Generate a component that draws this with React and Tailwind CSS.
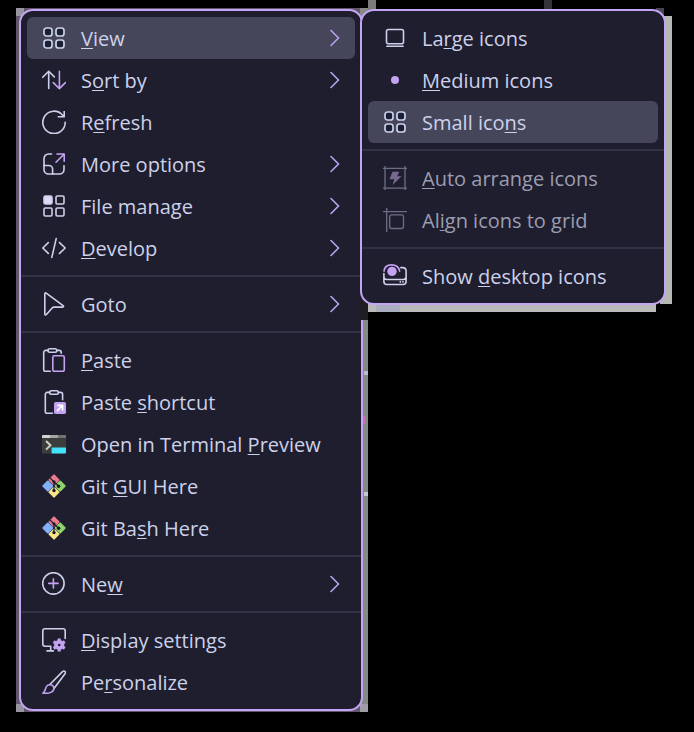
import React from "react";

const LINE = "#cdd0ea";
const ACCENT = "#c4a2f2";

function Icon({ children, className = "" }) {
  return (
    <svg
      viewBox="0 0 24 24"
      aria-hidden="true"
      fill="none"
      stroke={LINE}
      strokeWidth="1.6"
      strokeLinecap="round"
      strokeLinejoin="round"
      className={`h-6 w-6 shrink-0 ${className}`}
    >
      {children}
    </svg>
  );
}

const GridIcon = () => (
  <Icon>
    <g fill="#1b2135" strokeWidth="1.7">
      <rect x="2" y="2" width="8" height="8" rx="2.5" />
      <rect x="14" y="2" width="8" height="8" rx="2.5" />
      <rect x="2" y="14" width="8" height="8" rx="2.5" />
      <rect x="14" y="14" width="8" height="8" rx="2.5" />
    </g>
  </Icon>
);

const SortIcon = () => (
  <Icon>
    <path d="M6.7 20.5V3.3M.7 9.3l6-6 5.6 5.6" />
    <path stroke={ACCENT} d="M17.4 3.3v17.2M11.3 14.6l6.1 6 6-6" />
  </Icon>
);

const RefreshIcon = () => (
  <Icon>
    <path d="M23.2 12.3A11.2 11.2 0 1 1 20.6 5.2l1.5 1.3" />
    <path d="M22.2 1v5.7h-6.5" strokeLinecap="butt" />
  </Icon>
);

const OptionsIcon = () => (
  <Icon>
    <path d="M9.6 2H6.5A4.5 4.5 0 0 0 2 6.5v11A4.5 4.5 0 0 0 6.5 22h11a4.5 4.5 0 0 0 4.5-4.5v-3.7" />
    <path d="M2 13.500h5a3.600 3.600 0 0 1 3.600 3.600V22" />
    <path stroke={ACCENT} d="M14 10.200 22 2.200M15 2h7.200v7.300" />
  </Icon>
);

const TilesIcon = () => (
  <Icon>
    <rect x="2" y="2" width="8" height="8" rx="1.5" fill="#dcdcf8" />
    <rect x="14" y="2" width="8" height="8" rx="1.2" />
    <rect x="2" y="14" width="8" height="8" rx="1.2" />
    <rect x="14" y="14" width="8" height="8" rx="1.2" />
  </Icon>
);

const CodeIcon = () => (
  <Icon>
    <path d="M6.3 6.6.8 12l5.5 5.4M17.5 6.6l5.7 5.4-5.7 5.4M14.2 2.6 9.8 21.4" />
  </Icon>
);

const PointerIcon = () => (
  <Icon>
    <path d="M2.8 2v20c0 1.2.9 1.3 1.6.5l5.8-6.5c.6-.7 1-.9 1.8-.9h8.6c1 0 1.2-.9.5-1.4L4.200 1.200C3.400.6 2.800 1 2.800 2Z" />
  </Icon>
);

const PasteIcon = () => (
  <Icon>
    <path d="M6 2.400H3.700a2 2 0 0 0-2 2v17a2 2 0 0 0 2 2h4.500M14.800 2.400h2.400a2 2 0 0 1 2 2v.8" />
    <rect x="6" y=".8" width="8.800" height="3.400" rx="1.700" />
    <rect x="10.800" y="7.800" width="11.500" height="15.500" rx="1.600" stroke={ACCENT} />
  </Icon>
);

const PasteShortcutIcon = () => (
  <Icon>
    <path d="M7.600 2.400H5.300a2 2 0 0 0-2 2v17a2 2 0 0 0 2 2h5.200M16.400 2.400h2.200a2 2 0 0 1 2 2v5.400" />
    <rect x="7.600" y=".8" width="8.800" height="3.400" rx="1.700" />
    <rect x="12" y="12" width="12" height="12" rx="1.800" fill={ACCENT} stroke="none" />
    <path d="M15.500 20.600 20.200 15.800M16 15.400h4.600V20" stroke="#fff" />
  </Icon>
);

const TerminalIcon = () => (
  <Icon>
    <g stroke="none">
      <rect y="3" width="24" height="18.600" rx="1" fill="#3b3d3d" />
      <path d="M1 3h7v3H0V4a1 1 0 0 1 1-1Z" fill="#d2d2d2" />
      <path d="M8 3h8v3H8z" fill="#a5a5a5" />
      <path d="M16 3h7a1 1 0 0 1 1 1v2h-8z" fill="#737373" />
      <path d="M9.600 15.600H24v5a1 1 0 0 1-1 1H9.600z" fill="#42e2fb" />
    </g>
    <path d="M4 9l4.500 4.300L4 17.600" stroke="#cfcfc9" strokeWidth="2" strokeLinecap="butt" strokeLinejoin="miter" />
  </Icon>
);

const GitIcon = () => (
  <Icon>
    <g transform="rotate(45 12 12)" stroke="none">
      <rect x="3.500" y="3.500" width="8.300" height="8.300" rx="1" fill="#ea7b8c" />
      <rect x="12.200" y="3.500" width="8.300" height="8.300" rx="1" fill="#8fd46a" />
      <rect x="3.500" y="12.200" width="8.300" height="8.300" rx="1" fill="#82aff8" />
      <rect x="12.200" y="12.200" width="8.300" height="8.300" rx="1" fill="#f8e58b" />
    </g>
    <path d="M8.200 4.200 12 8v9M12 8l4.400 4" stroke="#191926" strokeWidth="1.200" />
    <g fill="#191926" stroke="none">
      <circle cx="12" cy="7.800" r="1.500" />
      <circle cx="12" cy="16.600" r="1.700" />
      <circle cx="16.600" cy="12.200" r="1.700" />
    </g>
  </Icon>
);

const NewIcon = () => (
  <Icon>
    <circle cx="11.400" cy="11.400" r="10.700" />
    <path stroke={ACCENT} d="M11.400 6.700v9.400M6.700 11.400h9.400" />
  </Icon>
);

const DisplayIcon = () => (
  <Icon>
    <path d="M8.700 18.300H3A2.200 2.200 0 0 1 .8 16.100V3A2.200 2.200 0 0 1 3 .800h18A2.200 2.200 0 0 1 23.200 3v7.500M8.700 18.300v4.400M5 22.900h6.400" />
    <g stroke={ACCENT}>
      <circle cx="17.200" cy="17" r="3.200" strokeWidth="3.800" />
      <path
        strokeWidth="3.200"
        strokeLinecap="butt"
        d="M17.200 12.800v-2.300M17.200 21.200v2.300M13.600 14.900l-2-1.200M20.800 19.100l2 1.200M13.600 19.100l-2 1.200M20.800 14.900l2-1.200"
      />
    </g>
  </Icon>
);

const BrushIcon = () => (
  <Icon>
    <path d="M7.800 14.500 20.500 1.600c1.700-1.500 3.800.3 2.500 2.200L12 18.500" />
    <path
      stroke={ACCENT}
      d="M7.700 14.700c2.300-.2 4.300 1.500 4.200 3.800-.1 3.400-4.300 5.400-11 4.700 1.900-1 2.200-2.600 2.700-4.700.6-2.300 2-3.700 4.100-3.800Z"
    />
  </Icon>
);

const LargeIcon = () => (
  <Icon>
    <rect x="3.500" y="3.500" width="17" height="14.200" rx="2" />
    <path d="M3.800 20.300h16.400" />
  </Icon>
);

const DotIcon = () => (
  <Icon>
    <circle cx="12" cy="12" r="4" fill={ACCENT} stroke="none" />
  </Icon>
);

const ArrangeIcon = () => (
  <Icon>
    <path stroke="#6d6e85" strokeWidth="1.300" strokeLinecap="butt" d="M2 0v24M22 0v24M0 2.300h24M0 22.200h24" />
    <path fill="#77698f" stroke="none" d="M9.500 5.700h6.700l-1.900 4.600h4.200L9.600 19l1.700-5.800H6.500z" />
  </Icon>
);

const AlignIcon = () => (
  <Icon>
    <g stroke="#6d6e85" strokeWidth="1.300" strokeLinecap="butt">
      <path d="M3.700 0v24M0 3.700h24" />
      <rect x="6.700" y="6.900" width="13.800" height="13.600" rx="2" />
    </g>
  </Icon>
);

const DesktopIcon = () => (
  <Icon>
    <path d="M.9 9.500v8a3 3 0 0 0 3 3h16.200a3 3 0 0 0 3-3V7a3.500 3.500 0 0 0-3.500-3.400h-1.800M1 13.500a3 3 0 0 0 2.900 2h16.200a3 3 0 0 0 2.900-2" />
    <path d="M17.300 17.500v.6M20 17.500v.6" />
    <path stroke={ACCENT} d="M1 7.200C1.400 3.200 4.500.9 8.500.9c4.300 0 7.500 2.400 8.200 6.300" />
    <circle cx="9" cy="7.400" r="4.700" fill={ACCENT} stroke="none" />
  </Icon>
);

/* In a label the letter between underscores is the access key. */
function Label({ text }) {
  const [before, key, after] = text.split("_");
  return (
    <span className="flex-1 pt-0.5 text-left whitespace-nowrap">
      {before}
      {key && (
        <u className="underline decoration-1 underline-offset-2 [text-decoration-skip-ink:none]">{key}</u>
      )}
      {after}
    </span>
  );
}

function MenuItem({ icon: ItemIcon, label, submenu, active, disabled }) {
  return (
    <button
      type="button"
      role="menuitem"
      disabled={disabled}
      aria-haspopup={submenu ? "menu" : undefined}
      className={`flex h-[42px] w-full items-center gap-[15px] rounded-md pr-3.5 pl-[15px] ${
        active ? "bg-[#45465a]" : "enabled:hover:bg-[#313244]"
      } ${disabled ? "text-[#9c9db1]" : "text-[#cdd1ea]"}`}
    >
      <ItemIcon />
      <Label text={label} />
      {submenu && (
        <svg
          viewBox="0 0 12 18"
          aria-hidden="true"
          fill="none"
          stroke="#b9a3ee"
          strokeWidth="1.600"
          strokeLinecap="round"
          className="h-[18px] w-3 shrink-0"
        >
          <path d="M2 1.500 9.500 9 2 16.500" />
        </svg>
      )}
    </button>
  );
}

function Menu({ groups, name, className }) {
  return (
    <div
      role="menu"
      aria-label={name}
      className={`rounded-[14px] border-2 border-[#c4a5f3] bg-[#1e1e2e] py-1.5 ${className}`}
    >
      {groups.map((items, index) => (
        <React.Fragment key={index}>
          {index > 0 && <hr className="my-1.5 border-t-2 border-[#323244]" />}
          <div className="px-1.5">
            {items.map((item) => (
              <MenuItem key={item.label} {...item} />
            ))}
          </div>
        </React.Fragment>
      ))}
    </div>
  );
}

const mainGroups = [
  [
    { icon: GridIcon, label: "_V_iew", submenu: true, active: true },
    { icon: SortIcon, label: "S_o_rt by", submenu: true },
    { icon: RefreshIcon, label: "R_e_fresh" },
    { icon: OptionsIcon, label: "More options", submenu: true },
    { icon: TilesIcon, label: "File manage", submenu: true },
    { icon: CodeIcon, label: "_D_evelop", submenu: true },
  ],
  [{ icon: PointerIcon, label: "Goto", submenu: true }],
  [
    { icon: PasteIcon, label: "_P_aste" },
    { icon: PasteShortcutIcon, label: "Paste _s_hortcut" },
    { icon: TerminalIcon, label: "Open in Terminal _P_review" },
    { icon: GitIcon, label: "Git _G_UI Here" },
    { icon: GitIcon, label: "Git Ba_s_h Here" },
  ],
  [{ icon: NewIcon, label: "Ne_w_", submenu: true }],
  [
    { icon: DisplayIcon, label: "_D_isplay settings" },
    { icon: BrushIcon, label: "Pe_r_sonalize" },
  ],
];

const viewGroups = [
  [
    { icon: LargeIcon, label: "La_r_ge icons" },
    { icon: DotIcon, label: "_M_edium icons" },
    { icon: GridIcon, label: "Small ico_n_s", active: true },
  ],
  [
    { icon: ArrangeIcon, label: "_A_uto arrange icons", disabled: true },
    { icon: AlignIcon, label: "Al_i_gn icons to grid", disabled: true },
  ],
  [{ icon: DesktopIcon, label: "Show _d_esktop icons" }],
];

export default function App() {
  return (
    <main className="min-h-screen overflow-hidden bg-black px-4 pt-2 pb-5 font-['Open_Sans','Noto_Sans',sans-serif] text-xl leading-7">
      <div className="relative w-[352px] bg-[#62566b] pt-px pr-[5px] pb-px pl-[3px]">
        {/* Slivers of wallpaper around the main menu */}
        <div className="absolute top-0 left-0 h-2 w-2 bg-[#99959f]" />
        <div className="absolute bottom-0 left-0 h-2 w-2 bg-[#99959f]" />
        <div className="absolute top-0 right-0 bottom-0 w-2 bg-[#858a84]" />
        <div className="absolute right-0 bottom-0 h-2 w-2 bg-[#a09da8]" />
        <div className="absolute top-[363px] right-0 h-1 w-1 bg-[#b9bdd0]" />
        <div className="absolute top-[408px] right-[3px] h-2 w-0.5 bg-[#cd6fb4]" />
        <div className="absolute top-[484px] right-0 h-1 w-1 bg-[#c4c8d2]" />

        <Menu groups={mainGroups} name="Desktop" className="relative" />

        {/* View submenu, opened over the main menu's right edge */}
        <div className="absolute top-px left-[344px] w-[306px]">
          <div className="absolute -top-[9px] left-2 h-3 w-2 bg-[#7d7a7e]" />
          <div className="absolute -top-[9px] left-[184px] h-3 w-2 bg-[#353338]" />
          <div className="absolute -top-px right-0.5 h-3 w-2 bg-[#49454f]" />
          <div className="absolute top-[7px] -right-1.5 bottom-px w-3 bg-[#b5b8b3]" />
          <div className="absolute right-2.5 -bottom-[7px] left-2 h-3 bg-[#bababa]" />
          <div className="absolute -bottom-[7px] left-4 h-3 w-6 bg-[#a9adbd]" />
          <div className="absolute -bottom-[15px] left-0 h-6 w-2 bg-[#1e1e22]" />
          <Menu groups={viewGroups} name="View" className="relative" />
        </div>
      </div>
    </main>
  );
}
